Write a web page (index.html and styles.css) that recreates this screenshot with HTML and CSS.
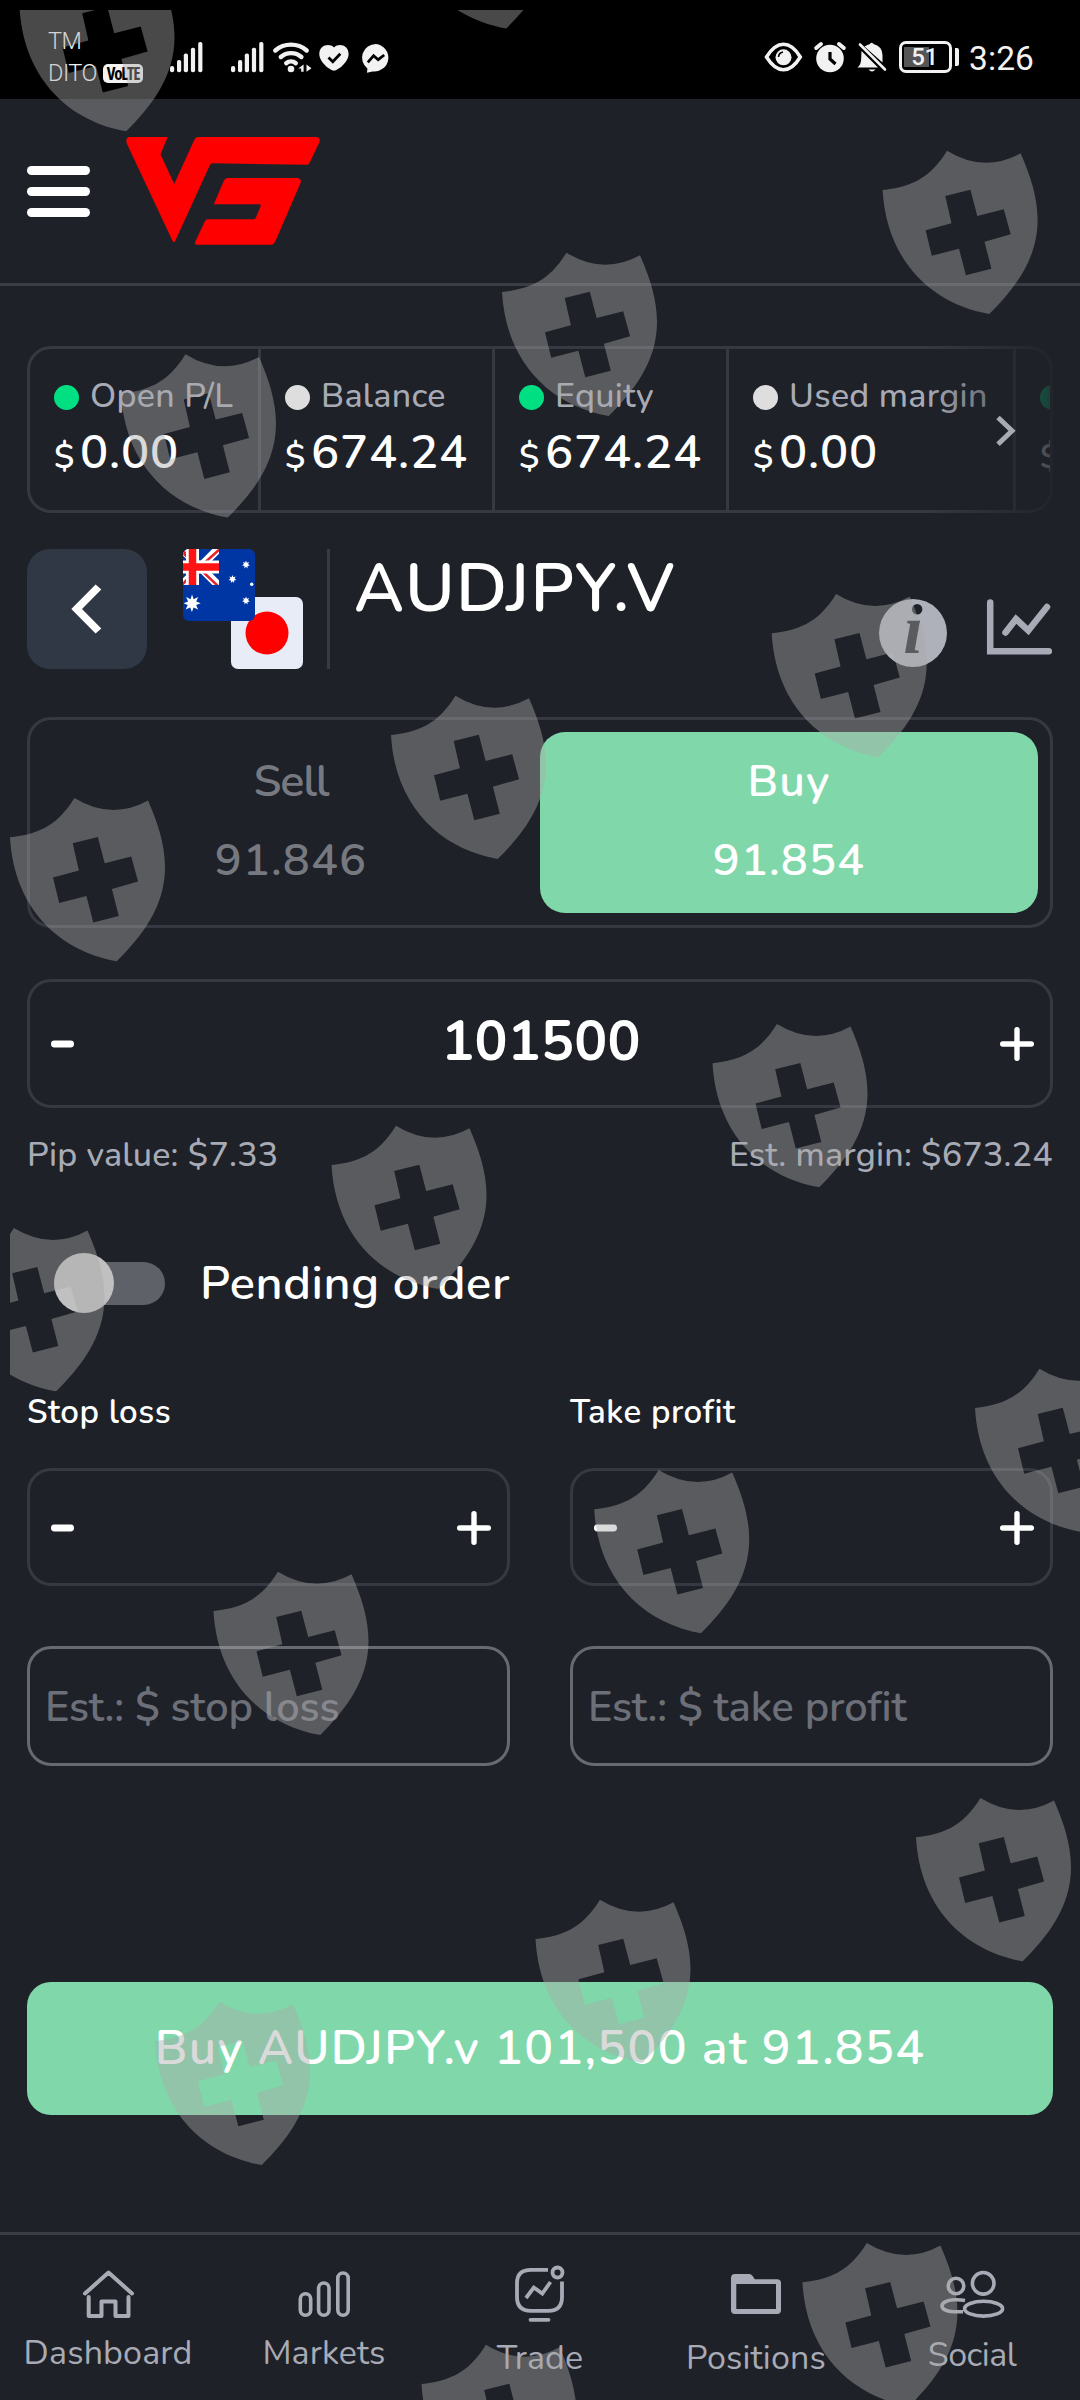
FILE: index.html
```html
<!DOCTYPE html>
<html lang="en">
<head>
<meta charset="utf-8">
<title>AUDJPY.V – Trade</title>
<link rel="stylesheet" href="styles.css">
</head>
<body>
<div class="statusbar">
  <div class="carriers">
    <span class="carrier">TM</span>
    <span class="carrier">DITO <b class="volte">VoLTE</b></span>
  </div>
  <svg class="status-left" width="228" height="40" viewBox="165 38 228 40" fill="#f2f2f2">
    <g id="signal">
      <rect x="170" y="66" width="4.2" height="6.3" rx="2"/><rect x="177" y="60" width="4.2" height="12.3" rx="1.8"/><rect x="183.8" y="53.5" width="4.2" height="18.8" rx="1.8"/><rect x="190.9" y="47.7" width="4.2" height="24.6" rx="1.8"/><rect x="198.2" y="42" width="4.2" height="30.3" rx="1.8"/>
    </g>
    <use href="#signal" x="61"/>
    <g fill="none" stroke="#f2f2f2" stroke-width="4.4" stroke-linecap="round">
      <path d="M275.3 50.5a24 24 0 0 1 31.4 0"/><path d="M280.8 57a15.500 15.500 0 0 1 20.600 0"/><path d="M286.200 63.200a7.500 7.500 0 0 1 9.600 0"/>
    </g>
    <circle cx="291" cy="69" r="3.300"/>
    <path d="M303.600 64.500v7.300h-2.400v-3.400h-3zM306.500 64.500v7.300l5-3.600z"/>
    <path d="M334 70.700c-4-.7-14.700-8.400-14.700-16.800 0-8.700 9.700-11.400 14.700-6.500 5-4.900 14.600-2.200 14.600 6.500 0 8.400-10.600 16.100-14.600 16.800z"/>
    <path d="M328.500 57.500l4.300 4.300 7.500-8" fill="none" stroke="#000" stroke-width="2.800"/>
    <path d="M376 44a14 13.700 0 1 1-3.500 27.400l-5.500 1.300.4-4.200A14 13.700 0 0 1 376 44z"/>
    <path d="M367.800 62.300l5.800-6.600 4.600 4 6-4.700" fill="none" stroke="#000" stroke-width="2.800"/>
  </svg>
  <div class="status-right">
    <svg width="123" height="34" viewBox="763 40 123 34" fill="#f2f2f2">
      <path d="M765.500 57C776 40 789 40 799.300 57 789 74 776 74 765.500 57z" fill="none" stroke="#f2f2f2" stroke-width="3.500"/>
      <circle cx="782.500" cy="57.300" r="8"/>
      <path d="M777.500 57a5.500 5.500 0 0 1 4.500-5" fill="none" stroke="#000" stroke-width="1.600"/>
      <circle cx="829" cy="58.500" r="13.800"/>
      <path d="M815.200 48l4.800-4M842.800 48l-4.800-4" stroke="#f2f2f2" stroke-width="4" stroke-linecap="round"/>
      <path d="M829 52v7l5.500 5" fill="none" stroke="#000" stroke-width="3.200"/>
      <path d="M860.500 51L877 67.500h-20.500q3.700-3 3.700-9zM863.500 46.500q3-2 5.500-2.500 1.500-2.500 3.500 0 8.500 2 9 11v7.500z"/>
      <path d="M859 44.500L884 69.500" stroke="#f2f2f2" stroke-width="2.600" stroke-linecap="round"/>
      <path d="M867.500 69.500h7q-3.500 4-7 0z"/>
    </svg>
    <div class="battery"><span class="battery-text">51</span></div>
    <span class="nub"></span>
    <span class="clock">3:26</span>
  </div>
</div>

<header class="header">
  <div class="burger"><i></i><i></i><i></i></div>
  <svg width="196" height="110" viewBox="125 136 196 110" fill="#fe0000">
    <path d="M129 137H167.700L160.500 154.300 174.200 184 194.500 139.500Q195.600 137 198 137H316Q321 137.600 319.500 142L309.500 163Q308.800 164.700 306.500 164.700L213 163.300Q210.700 163.300 209.700 165.500L175.200 241Q174 243.500 172.600 241L126.800 143.500Q125.300 138 129 137z"/>
    <path d="M227 178H297Q302 178.500 300.500 183L275.500 241Q274 244.700 271 244.700H197Q194 244.500 195.200 242L205 221Q205.800 219.300 208 219.300H253.500Q255.200 219.300 256 217.500L260.700 206Q261 204.300 259.500 204.300H213.800L224 180.500Q225 178 227 178z"/>
  </svg>
</header>

<main class="main">
  <section class="stats">
    <div class="strip">
      <div class="cell"><div class="cell-label"><i class="dot green"></i>Open P/L</div><div class="cell-value"><small>$</small>0.00</div></div>
      <div class="cell"><div class="cell-label"><i class="dot"></i>Balance</div><div class="cell-value"><small>$</small>674.24</div></div>
      <div class="cell"><div class="cell-label"><i class="dot green"></i>Equity</div><div class="cell-value"><small>$</small>674.24</div></div>
      <div class="cell wide"><div class="cell-label"><i class="dot"></i>Used margin</div><div class="cell-value"><small>$</small>0.00</div></div>
      <div class="cell last"><div class="cell-label"><i class="dot green"></i></div><div class="cell-value"><small>$</small></div></div>
    </div>
    <div class="fade"></div>
    <svg class="next" width="24" height="34" viewBox="0 0 24 34"><path d="M3 3.500L17 16.800 3 30.200" fill="none" stroke="#a9abb3" stroke-width="5"/></svg>
  </section>

  <section class="symbol">
    <button class="back"><svg width="34" height="50" viewBox="70 584 34 50"><path d="M95.600 584.600L101.300 589.500 82 609 101.300 628.500 95.600 633.400 71.300 609z" fill="#fff"/></svg></button>
    <svg class="flags" width="120" height="120" viewBox="0 0 120 120">
      <rect x="48" y="48" width="72" height="72" rx="7" fill="#e8ecf7"/><circle cx="84" cy="84" r="21.500" fill="#fe0000"/>
      <clipPath id="au"><rect width="72" height="72" rx="6"/></clipPath>
      <clipPath id="canton"><rect width="36" height="36"/></clipPath>
      <g clip-path="url(#au)">
        <rect width="72" height="72" fill="#0036a3"/>
        <g clip-path="url(#canton)">
          <path d="M-4 -3L36 37M38 -3L-2 37" stroke="#fff" stroke-width="8"/>
          <path d="M-1 3L36 38M38 -1L18 17M-2 37L12 22M0 2L12 14" stroke="#e8202c" stroke-width="2.500"/>
          <path d="M9.500 0V36M0 18H36" stroke="#fff" stroke-width="13"/>
          <path d="M9.500 0V36M0 18H36" stroke="#fe1414" stroke-width="7.500"/>
        </g>
        <g fill="#fff">
          <path d="M9 45.500l1.700 4.700 4.500-2.200-2 4.500 4.500 1.800-4.600 1.700 2 4.500-4.500-2-1.700 4.600-1.700-4.600-4.500 2 2-4.500L.6 54.300l4.500-1.800-2-4.500 4.500 2.200z"/>
          <path id="star" d="M63 11.500l.9 2.200 2.300-.6-1.200 2 1.900 1.500-2.400.4.100 2.400-1.600-1.700-1.600 1.700.1-2.400-2.400-.4 1.900-1.500-1.200-2 2.300.6z"/>
          <use href="#star" x="-13.500" y="14.500"/><use href="#star" y="36"/><circle cx="68.700" cy="35.300" r="1.700"/>
        </g>
      </g>
    </svg>
    <span class="divider"></span>
    <h1 class="title">AUDJPY.V</h1>
    <span class="info">i</span>
    <svg class="chart" width="67" height="56" viewBox="986 598.500 67 56" fill="none" stroke="#a8abb5" stroke-width="6.500" stroke-linecap="round">
      <path d="M990.200 602V650.700H1048.800" stroke-linejoin="miter"/><path d="M1005.500 632L1016 618.500 1028.300 630 1047 606.500" stroke-linejoin="miter"/>
    </svg>
  </section>

  <section class="sides">
    <div class="side"><span class="sell">Sell</span><span>91.846</span></div>
    <div class="side active"><span>Buy</span><span>91.854</span></div>
  </section>

  <section class="stepper amount">
    <svg width="23" height="8" viewBox="0 0 23 8"><path d="M3.400 4H19.600" class="thick"/></svg>
    <strong class="quantity">101500</strong>
    <svg width="34" height="34" viewBox="0 0 34 34"><path d="M2.700 17H31.300M17 2.700V31.300" class="plus"/></svg>
  </section>
  <div class="notes"><span>Pip value: $7.33</span><span>Est. margin: $673.24</span></div>

  <label class="pending"><span class="toggle"><i class="knob"></i></span>Pending order</label>

  <section class="limits">
    <div class="limit">
      <span class="limit-label">Stop loss</span>
      <div class="stepper"><svg width="23" height="8" viewBox="0 0 23 8"><path d="M3.400 4H19.600" class="thick"/></svg><svg width="34" height="34" viewBox="0 0 34 34"><path d="M2.700 17H31.300M17 2.700V31.300" class="plus"/></svg></div>
      <input class="estimate" placeholder="Est.: $ stop loss">
    </div>
    <div class="limit">
      <span class="limit-label">Take profit</span>
      <div class="stepper"><svg width="23" height="8" viewBox="0 0 23 8"><path d="M3.400 4H19.600" class="thick"/></svg><svg width="34" height="34" viewBox="0 0 34 34"><path d="M2.700 17H31.300M17 2.700V31.300" class="plus"/></svg></div>
      <input class="estimate" placeholder="Est.: $ take profit">
    </div>
  </section>

  <button class="submit">Buy AUDJPY.v 101,500 at 91.854</button>
</main>

<nav class="nav">
  <a class="tab"><svg width="60" height="60" viewBox="78 2260 60 60" fill="none" stroke="#a8abb5" stroke-width="4" stroke-linecap="round" stroke-linejoin="round"><path d="M85 2293.500L108.500 2272.500 132 2293.500M88.700 2297V2316H101.500V2301.500H115.500V2316H128.500V2297"/></svg>Dashboard</a>
  <a class="tab"><svg width="60" height="60" viewBox="294 2260 60 60" fill="none" stroke="#a8abb5" stroke-width="3.600"><rect x="300.300" y="2293.800" width="10.400" height="21.400" rx="5.200"/><rect x="318.600" y="2283" width="10.400" height="32.200" rx="5.200"/><rect x="337.800" y="2273" width="10.400" height="42.200" rx="5.200"/></svg>Markets</a>
  <a class="tab trade"><svg width="60" height="64" viewBox="510 2260 60 64" fill="none" stroke="#a8abb5" stroke-width="3.800"><path d="M548 2269.800H531Q517 2269.800 517 2283V2297Q517 2310.800 531 2310.800H548.500Q562 2310.800 562 2297V2281.500"/><path d="M526 2298L533.800 2287.500 542.300 2293.500 550.500 2282"/><path d="M530.500 2319.800H548.500" stroke-linecap="round"/><circle cx="557.500" cy="2272.500" r="5"/></svg>Trade</a>
  <a class="tab positions"><svg width="60" height="60" viewBox="726 2260 60 60" fill="#a8abb5" fill-rule="evenodd"><path d="M735 2274h14.500q2 0 3.500 2.500l1.700 2.700H777q4 0 4 4V2310q0 4-4 4H735q-4 0-4-4V2278q0-4 4-4zM736.300 2284V2309H776V2284z"/></svg>Positions</a>
  <a class="tab social"><svg width="72" height="60" viewBox="936 2260 72 60" fill="none" stroke="#a8abb5" stroke-width="3.600"><circle cx="956" cy="2286" r="7.800"/><circle cx="983.200" cy="2283.300" r="10.800"/><ellipse cx="983.600" cy="2308.700" rx="19" ry="7.400"/><path d="M965 2300.500Q960 2299.500 954 2299.800C938 2300.500 938 2311.500 954 2311.800H963"/></svg>Social</a>
</nav>

<svg class="shields" width="1070" height="2390" viewBox="10 10 1070 2390">
  <defs><path id="shield" fill-rule="evenodd" d="M0 0C25-3 46-9 64.400-39.300Q101.600-16.600 138-36.700C148-14 155 8 155 30 155 70 131 100 106.700 124 50 114 4 72 0 0zM62.700 6L87.800-.3 94.700 26 121.200 19.300 128.100 44.300 101.900 51.700 108.800 78.700 83.300 85.300 76.400 58.700 49.200 65.700 43 40.300 68.900 33.300z"/></defs>
  <g fill="#aaa" fill-opacity=".43">
    <use href="#shield" x="19.500" y="7.300"/><use href="#shield" x="399.500" y="-95.500"/>
    <use href="#shield" x="882.600" y="190"/><use href="#shield" x="502" y="292"/><use href="#shield" x="121" y="393.600"/>
    <use href="#shield" x="771.700" y="633.300"/><use href="#shield" x="391" y="735"/><use href="#shield" x="10" y="837.300"/>
    <use href="#shield" x="712.500" y="1063.300"/><use href="#shield" x="331.500" y="1165"/><use href="#shield" x="-50.500" y="1267.300"/>
    <use href="#shield" x="975" y="1408"/><use href="#shield" x="594.200" y="1509.200"/><use href="#shield" x="213.500" y="1611"/>
    <use href="#shield" x="916" y="1837.300"/><use href="#shield" x="535.500" y="1939"/><use href="#shield" x="155" y="2041"/>
    <use href="#shield" x="802.400" y="2282.300"/><use href="#shield" x="421.500" y="2384"/>
  </g>
</svg>
</body>
</html>
```
FILE: styles.css
```css
* { box-sizing: border-box; }
body {
  margin: 0;
  width: 1080px;
  height: 2400px;
  display: flex;
  flex-direction: column;
  position: relative;
  overflow: hidden;
  background: #1e2128;
  color: #fff;
  font-family: Nunito, Lato, sans-serif;
  font-weight: 600;
}
svg { display: block; flex: none; }
button { border: 0; padding: 0; color: #fff; font-family: inherit; }

/* Status bar */
.statusbar {
  height: 99px;
  padding: 0 46px 0 48px;
  display: flex;
  background: #000;
  color: #f2f2f2;
  font-family: Roboto, sans-serif;
  font-weight: 400;
}
.carriers { width: 117px; padding-top: 25px; display: flex; flex-direction: column; }
.carrier { height: 32px; line-height: 32px; font-size: 23.5px; font-weight: 300; letter-spacing: -.5px; white-space: nowrap; display: flex; align-items: center; gap: 6px; }
.volte { width: 40px; height: 19px; border-radius: 5px; background: #f2f2f2; color: #000; font: 700 17px/19px "Open Sans", sans-serif; font-stretch: condensed; letter-spacing: -1.2px; text-align: center; }
.status-left { margin-top: 38px; }
.status-right { margin-left: auto; height: 34px; margin-top: 40px; display: flex; align-items: center; }
.battery { width: 53px; height: 32px; margin-left: 12px; border: 3px solid #f2f2f2; border-radius: 7px; padding: 3px 3px 3px 1px; background: linear-gradient(90deg, #555 25px, transparent 25px) no-repeat 2px 3px / 43px 20px; text-align: center; }
.battery-text { display: block; font: 500 24px/20px Roboto, sans-serif; letter-spacing: -.5px; }
.nub { width: 4px; height: 18px; margin-left: 3px; border-radius: 0 2px 2px 0; background: #f2f2f2; }
.clock { margin-left: 10px; font-size: 33.5px; line-height: 34px; padding-top: 3px; letter-spacing: .1px; }

/* Header */
.header { height: 187px; padding-left: 27px; border-bottom: 3px solid #3a3d45; display: flex; align-items: center; gap: 35px; }
.burger { width: 63px; display: flex; flex-direction: column; gap: 12px; }
.burger i { height: 9px; border-radius: 5px; background: #fff; }

.main { padding: 60px 27px 0; display: flex; flex-direction: column; }

/* Account figures */
.stats { position: relative; }
.strip { height: 167px; border: 3px solid #363941; border-radius: 24px; display: flex; overflow: hidden; }
.cell { width: 234px; flex: none; padding: 23px 0 0 24px; border-right: 3px solid #363941; }
.cell:first-child { width: 231px; }
.cell.wide { width: 287px; }
.cell.last { width: 40px; overflow: hidden; border-right: 0; }
.cell-label { height: 48px; line-height: 48px; display: flex; align-items: center; gap: 11px; font-size: 34px; font-weight: 500; letter-spacing: .3px; color: #a8abb5; white-space: nowrap; }
.dot { width: 25px; height: 25px; flex: none; margin-top: 2px; border-radius: 50%; background: #dedede; }
.dot.green { background: #00e083; }
.cell-value { height: 64px; line-height: 65px; font-size: 47px; letter-spacing: .8px; white-space: nowrap; }
.cell-value small { display: inline-block; width: 26px; font-size: 34px; letter-spacing: 0; }
.fade { position: absolute; inset: 0 0 0 auto; width: 130px; background: linear-gradient(90deg, rgba(30, 33, 40, 0), rgba(30, 33, 40, .85)); }
.next { position: absolute; right: 34px; top: 68px; }

/* Instrument */
.symbol { height: 120px; margin-top: 36px; display: flex; align-items: flex-start; }
.back { width: 120px; height: 120px; border-radius: 23px; background: #303845; display: flex; align-items: center; justify-content: center; }
.back svg { margin-right: 1px; }
.flags { margin-left: 36px; }
.divider { width: 3px; height: 120px; margin-left: 24px; background: #383b43; }
.title { margin: 0 auto 0 24px; font-size: 68px; line-height: 79px; font-weight: 600; letter-spacing: 1.25px; }
.info { width: 68px; height: 68px; margin-top: 50px; border-radius: 50%; background: #aeb0ba; color: #1e2128; font: italic 700 70px/61px "Liberation Serif", serif; text-align: center; }
.chart { margin: 50px 0 0 39px; }

/* Sell / buy switch */
.sides { height: 211px; margin-top: 48px; padding: 12px; border: 3px solid #363941; border-radius: 24px; display: flex; }
.side { flex: 1; padding-top: 10px; border-radius: 25px; display: flex; flex-direction: column; text-align: center; font-size: 45px; line-height: 79px; letter-spacing: 1.1px; color: #777981; }
.side.active { background: #80d8aa; color: #fff; }
.sell { letter-spacing: -1.2px; }

/* Steppers */
.stepper { height: 118px; padding: 2px 16px 0 21px; border: 3px solid #363941; border-radius: 24px; display: flex; align-items: center; justify-content: space-between; }
.amount { height: 129px; margin-top: 51px; padding-top: 0; }
.quantity { font-size: 55px; line-height: 60px; font-weight: 700; letter-spacing: .2px; padding-bottom: 3px; margin-left: 8px; }
.thick { stroke: #fff; stroke-width: 6.8px; stroke-linecap: round; }
.plus { stroke: #fff; stroke-width: 5.4px; stroke-linecap: round; }

.notes { margin-top: 27px; display: flex; justify-content: space-between; font-size: 34px; line-height: 41px; font-weight: 500; letter-spacing: .22px; color: #a8abb5; }
.pending { height: 60px; margin-top: 77px; padding-left: 27px; display: flex; align-items: center; font-size: 47px; letter-spacing: .6px; }
.toggle { width: 111px; height: 43px; margin-right: 35px; border-radius: 22px; background: #5f6168; display: flex; align-items: center; }
.knob { width: 60px; height: 60px; flex: none; border-radius: 50%; background: #c0c0c0; }

/* Stop loss / take profit */
.limits { margin-top: 80px; display: grid; grid-template-columns: 1fr 1fr; gap: 60px; }
.limit { display: flex; flex-direction: column; }
.limit-label { font-size: 33px; line-height: 40px; letter-spacing: .5px; margin-bottom: 35px; }
.estimate { width: 100%; height: 120px; margin-top: 60px; padding: 3px 15px 0; border: 3px solid #686a72; border-radius: 24px; background: none; outline: 0; font: 600 41.5px Nunito, Lato, sans-serif; letter-spacing: -.1px; }
.estimate::placeholder { color: #6c6f78; opacity: 1; }

.submit { height: 133px; margin-top: 216px; padding-bottom: 2px; border-radius: 24px; background: #80d8aa; font-size: 48px; font-weight: 600; letter-spacing: 1.35px; }

/* Bottom tabs */
.nav { height: 168px; margin-top: auto; padding-top: 25px; border-top: 3px solid #3a3d45; display: flex; }
.tab { flex: 1; display: flex; flex-direction: column; align-items: center; font-size: 34px; line-height: 40px; font-weight: 400; letter-spacing: .15px; color: #a8abb5; }
.tab svg { margin-bottom: 13px; }
.tab.trade svg { margin-bottom: 13.5px; }
.tab.positions svg { margin-bottom: 17.5px; }
.tab.social { letter-spacing: -.5px; }
.tab.social svg { margin-bottom: 14.5px; }

.shields { position: absolute; left: 10px; top: 10px; pointer-events: none; }
```
